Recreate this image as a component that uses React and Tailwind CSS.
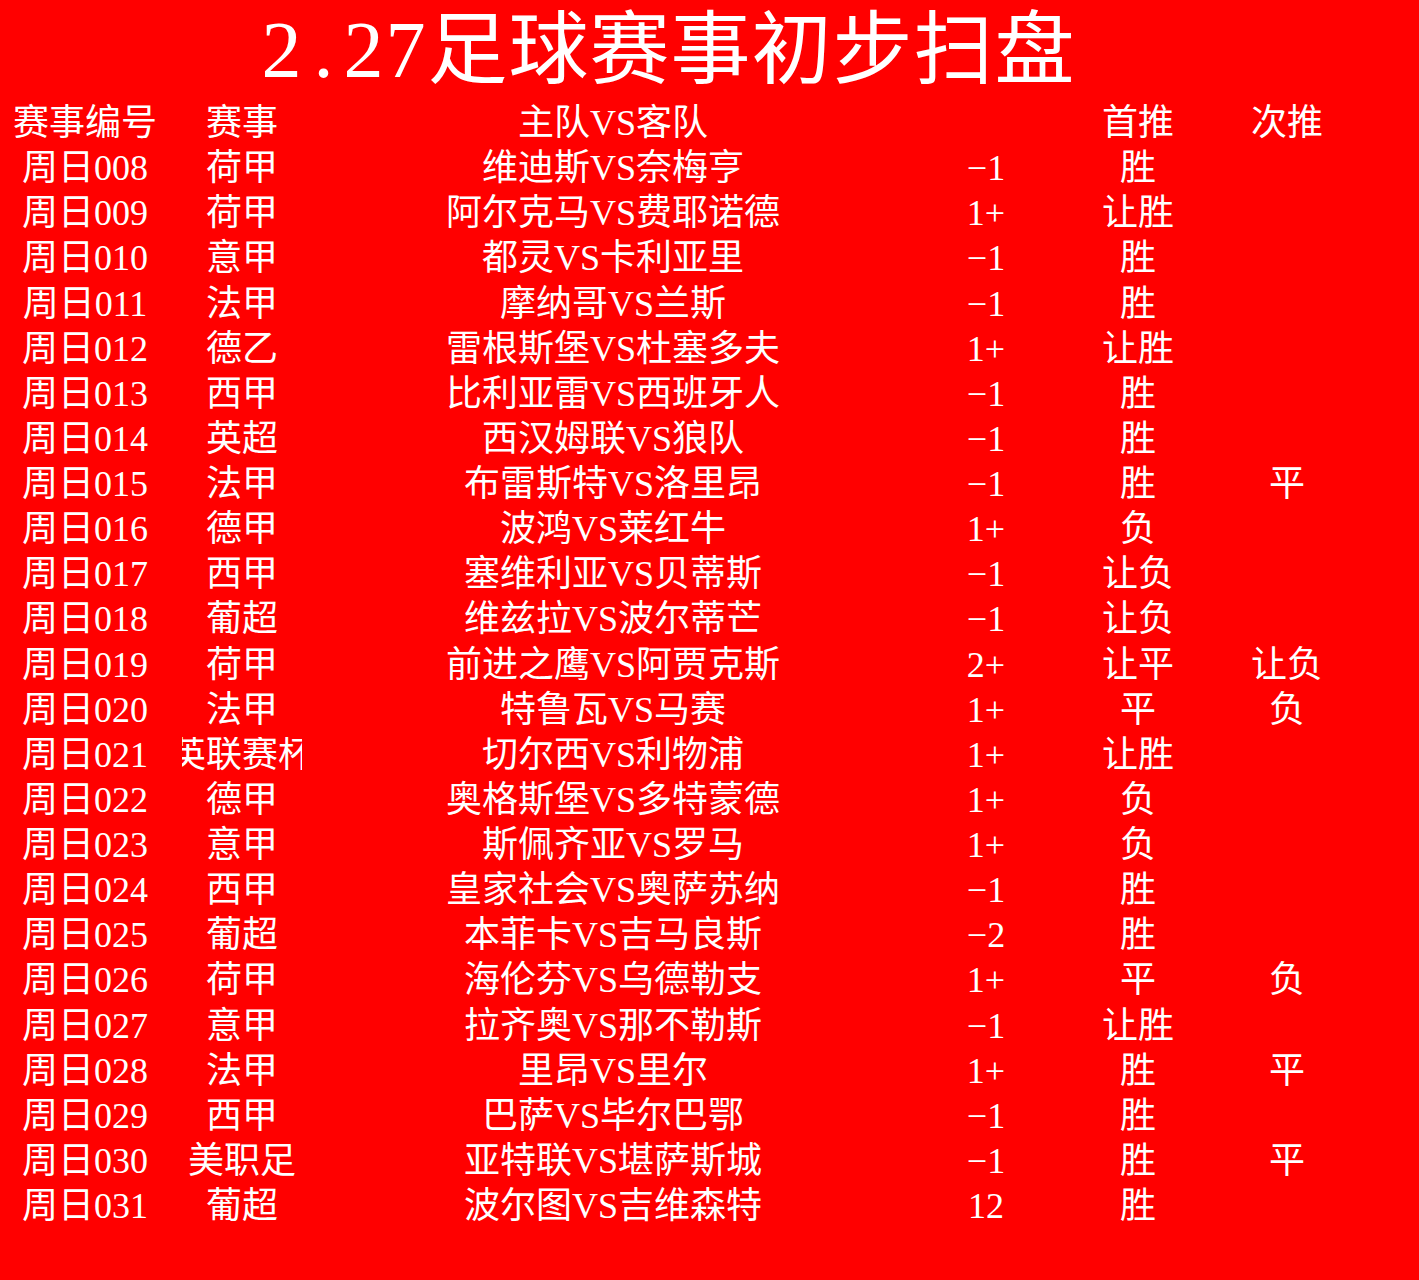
const rows = [
  ["周日008", "荷甲", "维迪斯VS奈梅亨", "−1", "胜", ""],
  ["周日009", "荷甲", "阿尔克马VS费耶诺德", "1+", "让胜", ""],
  ["周日010", "意甲", "都灵VS卡利亚里", "−1", "胜", ""],
  ["周日011", "法甲", "摩纳哥VS兰斯", "−1", "胜", ""],
  ["周日012", "德乙", "雷根斯堡VS杜塞多夫", "1+", "让胜", ""],
  ["周日013", "西甲", "比利亚雷VS西班牙人", "−1", "胜", ""],
  ["周日014", "英超", "西汉姆联VS狼队", "−1", "胜", ""],
  ["周日015", "法甲", "布雷斯特VS洛里昂", "−1", "胜", "平"],
  ["周日016", "德甲", "波鸿VS莱红牛", "1+", "负", ""],
  ["周日017", "西甲", "塞维利亚VS贝蒂斯", "−1", "让负", ""],
  ["周日018", "葡超", "维兹拉VS波尔蒂芒", "−1", "让负", ""],
  ["周日019", "荷甲", "前进之鹰VS阿贾克斯", "2+", "让平", "让负"],
  ["周日020", "法甲", "特鲁瓦VS马赛", "1+", "平", "负"],
  ["周日021", "英联赛杯", "切尔西VS利物浦", "1+", "让胜", ""],
  ["周日022", "德甲", "奥格斯堡VS多特蒙德", "1+", "负", ""],
  ["周日023", "意甲", "斯佩齐亚VS罗马", "1+", "负", ""],
  ["周日024", "西甲", "皇家社会VS奥萨苏纳", "−1", "胜", ""],
  ["周日025", "葡超", "本菲卡VS吉马良斯", "−2", "胜", ""],
  ["周日026", "荷甲", "海伦芬VS乌德勒支", "1+", "平", "负"],
  ["周日027", "意甲", "拉齐奥VS那不勒斯", "−1", "让胜", ""],
  ["周日028", "法甲", "里昂VS里尔", "1+", "胜", "平"],
  ["周日029", "西甲", "巴萨VS毕尔巴鄂", "−1", "胜", ""],
  ["周日030", "美职足", "亚特联VS堪萨斯城", "−1", "胜", "平"],
  ["周日031", "葡超", "波尔图VS吉维森特", "12", "胜", ""],
];

function Row({ cells }) {
  const long = cells[1].length > 3;
  return (
    <div className="flex h-[45.13px] items-center">
      <div className="w-[170px] shrink-0 text-center whitespace-nowrap">{cells[0]}</div>
      {long ? (
        <div className="ml-[12px] w-[120px] shrink-0 overflow-hidden flex justify-center whitespace-nowrap">
          <span className="shrink-0">{cells[1]}</span>
        </div>
      ) : (
        <div className="ml-[12px] w-[120px] shrink-0 text-center whitespace-nowrap">{cells[1]}</div>
      )}
      <div className="w-[622px] shrink-0 text-center whitespace-nowrap">{cells[2]}</div>
      <div className="w-[124px] shrink-0 text-center whitespace-nowrap">{cells[3]}</div>
      <div className="w-[180px] shrink-0 text-center whitespace-nowrap">{cells[4]}</div>
      <div className="w-[118px] shrink-0 text-center whitespace-nowrap">{cells[5]}</div>
    </div>
  );
}

export default function App() {
  return (
    <div
      className="w-[1419px] h-[1280px] bg-[#ff0000] text-white overflow-hidden text-[36px] leading-none"
      style={{ fontFamily: '"Liberation Serif", "Noto Sans CJK SC", serif' }}
    >
      <div className="h-[100.5px] flex items-center justify-center">
        <div className="ml-[-82px] text-[80px] leading-none whitespace-nowrap">
          <span className="tracking-[2px]">2</span>
          <span className="inline-block w-[40px] text-center">.</span>
          <span className="tracking-[2px]">27</span>
          <span className="tracking-[1px]">足球赛事初步扫盘</span>
        </div>
      </div>
      <Row cells={["赛事编号", "赛事", "主队VS客队", "", "首推", "次推"]} />
      {rows.map((r, i) => (
        <Row key={i} cells={r} />
      ))}
    </div>
  );
}
